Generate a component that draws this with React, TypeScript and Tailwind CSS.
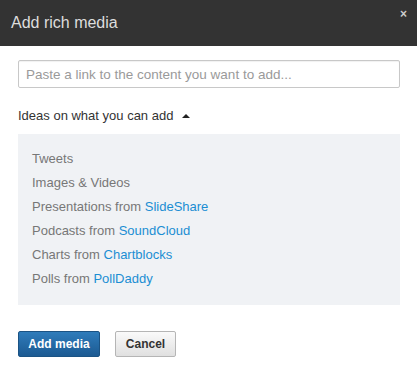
export default function App() {
  const ideas: [string, string?][] = [
    ["Tweets"],
    ["Images & Videos"],
    ["Presentations from ", "SlideShare"],
    ["Podcasts from ", "SoundCloud"],
    ["Charts from ", "Chartblocks"],
    ["Polls from ", "PollDaddy"],
  ];

  return (
    <div className="w-[417px] h-[369px] bg-white font-['Liberation_Sans',Arial,sans-serif]">
      <div className="relative h-[46px] bg-[#333333] pl-[11px] flex items-center">
        <h2 className="text-[16px] text-[#dddddd]">Add rich media</h2>
        <button className="absolute right-[10px] top-[8px] text-[12px] font-bold text-[#cccccc] leading-none">
          ×
        </button>
      </div>

      <div className="px-[18px] pt-[14px]">
        <input
          className="w-[382px] h-[28px] border border-[#c8c8c8] rounded-[2px] px-[7px] text-[13.5px] text-[#333] placeholder:text-[#9a9a9a] outline-none shadow-[inset_0_1px_1px_rgba(0,0,0,0.06)]"
          placeholder="Paste a link to the content you want to add..."
        />

        <div className="mt-[19px] flex items-center h-[18px] text-[13px] text-[#333333]">
          Ideas on what you can add
          <svg width="8" height="5" viewBox="0 0 8 5" className="ml-[9px] mb-[1px]">
            <path d="M0 5 L4 1 L8 5 Z" fill="#222" />
          </svg>
        </div>

        <div className="mt-[9px] w-[382px] h-[171px] bg-[#f0f2f5] pl-[14px] pt-[13px]">
          {ideas.map(([label, link]) => (
            <div key={label} className="h-[24px] leading-[24px] text-[13px] text-[#777777]">
              {label}
              {link && <a className="text-[#1b8ed3] cursor-pointer">{link}</a>}
            </div>
          ))}
        </div>

        <div className="mt-[26px] flex gap-[15px]">
          <button className="h-[26px] w-[82px] rounded-[2px] border border-[#1b5384] bg-gradient-to-b from-[#2f7cbb] to-[#1c5a92] text-white text-[12px] font-bold">
            Add media
          </button>
          <button className="h-[26px] w-[61px] rounded-[2px] border border-[#b5b5b5] bg-gradient-to-b from-[#fafafa] to-[#e0e0e0] text-[#333] text-[12px] font-bold">
            Cancel
          </button>
        </div>
      </div>
    </div>
  );
}
